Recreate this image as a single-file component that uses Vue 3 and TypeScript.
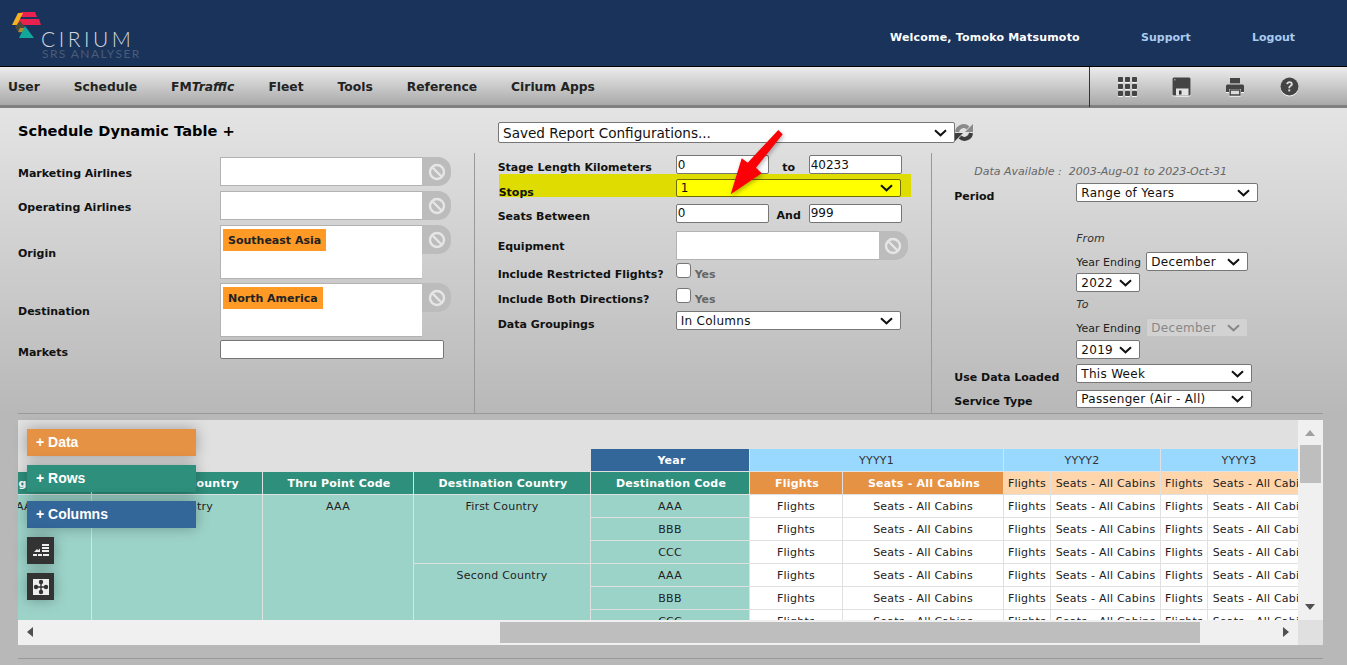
<template>
  <div class="page">
    <header class="top">
      <div class="logo">
        <svg class="logo-mark" width="32" height="30" viewBox="0 0 32 30">
          <polygon points="10,0 24,0 26,5 8,5" fill="#e8214f" />
          <polygon points="7,7 28,7 30,13 5,13" fill="#e8214f" />
          <polygon points="7,1 12,1 6,13 1,13" fill="#f5b324" />
          <polygon points="4,15 9,9 14,15 9,22" fill="#4a4a3a" />
          <polygon points="9,16 15,16 13,20 7,20" fill="#b08c2a" />
          <polygon points="14,14 23,26 8,26" fill="#12a79a" />
        </svg>
        <div class="logo-name">CIRIUM</div>
        <div class="logo-sub">SRS ANALYSER</div>
      </div>
      <div class="top-links">
        <span class="welcome">Welcome, Tomoko Matsumoto</span>
        <a class="support">Support</a>
        <a class="logout">Logout</a>
      </div>
    </header>

    <nav class="menu">
      <div class="menu-items">
        <a>User</a>
        <a>Schedule</a>
        <a>FM<i>Traffic</i></a>
        <a>Fleet</a>
        <a>Tools</a>
        <a>Reference</a>
        <a>Cirium Apps</a>
      </div>
      <div class="menu-icons">
        <svg width="20" height="20" viewBox="0 0 20 20" fill="#444">
          <template v-for="r in 3" :key="r">
            <rect v-for="c in 3" :key="c" :x="(c - 1) * 7" :y="(r - 1) * 7" width="5" height="5" rx="0.8" />
          </template>
        </svg>
        <svg width="20" height="20" viewBox="0 0 20 20">
          <rect x="0.5" y="0.5" width="18" height="18" rx="1.5" fill="#444" />
          <rect x="2" y="2" width="1.5" height="1.5" fill="#999" />
          <rect x="4" y="11.5" width="12.5" height="7" fill="#e4e4e4" />
          <rect x="7" y="13.5" width="2.5" height="4" fill="#333" />
        </svg>
        <svg width="20" height="20" viewBox="0 0 20 20" fill="#444">
          <rect x="4" y="1" width="10" height="5.5" />
          <path d="M1.5 7.5h15a1.5 1.5 0 0 1 1.5 1.5v6h-3v-3H3v3H0V9a1.5 1.5 0 0 1 1.5-1.5z" />
          <path d="M4.2 13h9.6v5H4.2z" fill="#ddd" stroke="#444" stroke-width="1.4" />
        </svg>
        <svg width="20" height="20" viewBox="0 0 20 20">
          <circle cx="9.5" cy="9.5" r="9" fill="#444" />
          <path d="M6.3 7.1C6.5 5.1 7.9 4.2 9.6 4.2c1.9 0 3.2 1.1 3.2 2.8 0 1.4-.8 2-1.7 2.6-.7.5-1 .8-1 1.7H8.4c0-1.4.4-2 1.3-2.7.7-.5 1.1-.8 1.1-1.5 0-.7-.5-1.2-1.2-1.2-.8 0-1.3.5-1.4 1.3z" fill="#ddd" />
          <rect x="8.3" y="12.4" width="1.9" height="2" fill="#ddd" />
        </svg>
      </div>
    </nav>

    <main class="body">
      <div class="title-row">
        <h1>Schedule Dynamic Table +</h1>
        <select class="saved"><option>Saved Report Configurations...</option></select>
        <svg class="refresh" width="20" height="19" viewBox="0 0 20 19" fill="none" stroke-width="4">
          <path d="M3 9A6.5 6.5 0 0 1 14 5" stroke="#8a8a8a" />
          <polygon points="11,9 19,9 19,1" fill="#8a8a8a" stroke="none" />
          <path d="M17 10A6.5 6.5 0 0 1 6 14" stroke="#3c3c3c" />
          <polygon points="9,10 1,10 1,18" fill="#3c3c3c" stroke="none" />
        </svg>
      </div>

      <section class="form">
        <div class="col col-left">
          <div class="row r1">
            <label>Marketing Airlines</label>
            <div class="pick"><div class="pick-box"></div><button class="clear"><svg width="18" height="18" viewBox="0 0 18 18" fill="none" stroke="#e6e6e6" stroke-width="2.4"><circle cx="9" cy="9" r="7" /><path d="M4 4l10 10" /></svg></button></div>
          </div>
          <div class="row r2">
            <label>Operating Airlines</label>
            <div class="pick"><div class="pick-box"></div><button class="clear"><svg width="18" height="18" viewBox="0 0 18 18" fill="none" stroke="#e6e6e6" stroke-width="2.4"><circle cx="9" cy="9" r="7" /><path d="M4 4l10 10" /></svg></button></div>
          </div>
          <div class="row r3">
            <label>Origin</label>
            <div class="pick tall"><div class="pick-box"><span class="tag">Southeast Asia</span></div><button class="clear"><svg width="18" height="18" viewBox="0 0 18 18" fill="none" stroke="#e6e6e6" stroke-width="2.4"><circle cx="9" cy="9" r="7" /><path d="M4 4l10 10" /></svg></button></div>
          </div>
          <div class="row r4">
            <label>Destination</label>
            <div class="pick tall"><div class="pick-box"><span class="tag">North America</span></div><button class="clear"><svg width="18" height="18" viewBox="0 0 18 18" fill="none" stroke="#e6e6e6" stroke-width="2.4"><circle cx="9" cy="9" r="7" /><path d="M4 4l10 10" /></svg></button></div>
          </div>
          <div class="row r5">
            <label>Markets</label>
            <input class="markets" type="text" />
          </div>
        </div>

        <div class="col col-mid">
          <div class="mrow m1">
            <label>Stage Length Kilometers</label>
            <input class="num" value="0" /><b class="sep">to</b><input class="num" value="40233" />
          </div>
          <div class="mrow m2">
            <label>Stops</label>
            <select class="wide yellow"><option>1</option></select>
          </div>
          <div class="mrow m3">
            <label>Seats Between</label>
            <input class="num" value="0" /><b class="sep">And</b><input class="num" value="999" />
          </div>
          <div class="mrow m4">
            <label>Equipment</label>
            <div class="pick mid"><div class="pick-box"></div><button class="clear"><svg width="18" height="18" viewBox="0 0 18 18" fill="none" stroke="#e6e6e6" stroke-width="2.4"><circle cx="9" cy="9" r="7" /><path d="M4 4l10 10" /></svg></button></div>
          </div>
          <div class="mrow m5">
            <label>Include Restricted Flights?</label>
            <span class="check"></span><b class="yes">Yes</b>
          </div>
          <div class="mrow m6">
            <label>Include Both Directions?</label>
            <span class="check"></span><b class="yes">Yes</b>
          </div>
          <div class="mrow m7">
            <label>Data Groupings</label>
            <select class="wide"><option>In Columns</option></select>
          </div>
          <svg class="arrow" width="60" height="70" viewBox="0 0 60 70">
            <polygon points="49.3,1 53.7,5.3 27,38.7 32.7,44.3 1.7,65.3 12.7,29.3 18.7,33.7" fill="#fb0007" />
          </svg>
        </div>

        <div class="col col-right">
          <div class="avail">Data Available :&nbsp; 2003-Aug-01 to 2023-Oct-31</div>
          <div class="rrow period">
            <label>Period</label>
            <select class="s-period"><option>Range of Years</option></select>
          </div>
          <div class="range">
            <em>From</em>
            <div class="ending"><span>Year Ending</span><select class="s-month"><option>December</option></select></div>
            <select class="s-year"><option>2022</option></select>
            <em class="to">To</em>
            <div class="ending e2"><span>Year Ending</span><select class="s-month" disabled><option>December</option></select></div>
            <select class="s-year y2"><option>2019</option></select>
          </div>
          <div class="rrow loaded">
            <label>Use Data Loaded</label>
            <select class="s-load"><option>This Week</option></select>
          </div>
          <div class="rrow service">
            <label>Service Type</label>
            <select class="s-load"><option>Passenger (Air - All)</option></select>
          </div>
        </div>
      </section>

      <section class="pivot">
        <div class="pivot-main">
          <div class="pivot-view">
            <table class="grid">
              <colgroup>
                <col v-for="w in colWidths" :key="w.id" :style="{ width: w.px + 'px' }" />
              </colgroup>
              <thead>
                <tr>
                  <th colspan="4" class="blank"></th>
                  <th class="h-blue">Year</th>
                  <th colspan="2" class="h-sky">YYYY1</th>
                  <th colspan="2" class="h-sky">YYYY2</th>
                  <th colspan="2" class="h-sky">YYYY3</th>
                </tr>
                <tr>
                  <th v-for="h in rowHeads" :key="h" class="h-green">{{ h }}</th>
                  <th class="h-orange">Flights</th>
                  <th class="h-orange">Seats - All Cabins</th>
                  <template v-for="y in 2" :key="y">
                    <th class="h-peach">Flights</th>
                    <th class="h-peach">Seats - All Cabins</th>
                  </template>
                </tr>
              </thead>
              <tbody>
                <tr v-for="(row, i) in rows" :key="i">
                  <template v-if="i === 0">
                    <td rowspan="6" class="c-green">AAA</td>
                    <td rowspan="6" class="c-green">One Country</td>
                    <td rowspan="6" class="c-green">AAA</td>
                  </template>
                  <td v-if="row.country" :rowspan="row.span" class="c-green">{{ row.country }}</td>
                  <td class="c-green">{{ row.code }}</td>
                  <template v-for="y in 3" :key="y">
                    <td>Flights</td>
                    <td>Seats - All Cabins</td>
                  </template>
                </tr>
              </tbody>
            </table>
          </div>
          <div class="vbar">
            <span class="tri up"></span>
            <div class="vthumb"></div>
            <span class="tri down"></span>
          </div>
        </div>
        <div class="pivot-foot">
          <div class="hbar">
            <span class="tri left"></span>
            <div class="hthumb"></div>
            <span class="tri right"></span>
          </div>
          <div class="corner"></div>
        </div>

        <div class="floats">
          <div class="fbtn f-data">+ Data</div>
          <div class="fbtn f-rows">+ Rows</div>
          <div class="fbtn f-cols">+ Columns</div>
          <div class="fsq">
            <svg width="16" height="14" viewBox="0 0 16 14" fill="#eee">
              <rect x="9" y="0" width="7" height="2" />
              <rect x="9" y="3" width="7" height="2" />
              <rect x="9" y="6" width="7" height="2" />
              <path d="M1 8l3-3 1.2 1.2L7 4.5V8z" />
              <path d="M0 10h4v2H0zM5 10h4v2H5zM10 10h6v2h-6z" />
            </svg>
          </div>
          <div class="fsq">
            <svg width="16" height="16" viewBox="0 0 16 16">
              <rect width="16" height="16" fill="#eee" />
              <circle cx="8" cy="3" r="2.2" fill="#333" />
              <circle cx="8" cy="13" r="2.2" fill="#333" />
              <circle cx="3" cy="8" r="2.2" fill="#333" />
              <circle cx="13" cy="8" r="2.2" fill="#333" />
              <path d="M8 4v8M4 8h8" stroke="#333" stroke-width="1.4" />
            </svg>
          </div>
        </div>
      </section>
      <div class="bottom-rule"></div>
    </main>
  </div>
</template>

<script setup lang="ts">
const colWidths = [
  { id: 'a', px: 127 },
  { id: 'b', px: 171 },
  { id: 'c', px: 151 },
  { id: 'd', px: 177 },
  { id: 'e', px: 159 },
  { id: 'f', px: 93 },
  { id: 'g', px: 161 },
  { id: 'h', px: 47 },
  { id: 'i', px: 110 },
  { id: 'j', px: 47 },
  { id: 'k', px: 110 }
]

const rowHeads = ['Origin Code', 'Thru Point Country', 'Thru Point Code', 'Destination Country', 'Destination Code']

const rows = [
  { country: 'First Country', span: 3, code: 'AAA' },
  { code: 'BBB' },
  { code: 'CCC' },
  { country: 'Second Country', span: 3, code: 'AAA' },
  { code: 'BBB' },
  { code: 'CCC' }
]
</script>

<style>
html,
body {
  margin: 0;
  height: 665px;
  overflow: hidden;
}
</style>

<style scoped>
.page {
  width: 1347px;
  height: 665px;
  overflow: hidden;
  font-family: 'DejaVu Sans', Verdana, sans-serif;
  font-size: 11px;
  color: #111;
  background: #b8b8b8;
}

.top {
  height: 66px;
  background: #1a335b;
  border-bottom: 1px solid #000;
  display: flex;
  justify-content: space-between;
}

.logo {
  width: 150px;
  position: relative;
}

.logo-mark {
  position: absolute;
  left: 11px;
  top: 12px;
}

.logo-name {
  position: absolute;
  left: 41px;
  top: 29px;
  line-height: 20px;
  font-family: Lato, sans-serif;
  font-weight: 300;
  font-size: 21px;
  letter-spacing: 3.5px;
  color: #d2d7de;
}

.logo-sub {
  position: absolute;
  left: 42px;
  top: 49px;
  line-height: 10px;
  font-family: Lato, sans-serif;
  font-size: 12px;
  letter-spacing: 1.4px;
  white-space: nowrap;
  color: #4a5c76;
}

.top-links {
  display: flex;
  align-items: center;
  padding-top: 8px;
  height: 58px;
  font-weight: bold;
  font-size: 11px;
}

.welcome {
  color: #fff;
  width: 251px;
  letter-spacing: 0.2px;
}

.support {
  color: #a9cbee;
  width: 111px;
}

.logout {
  color: #a9cbee;
  width: 95px;
}

.menu {
  height: 38px;
  display: flex;
  justify-content: space-between;
  background: linear-gradient(#ececec, #a9a9a9);
  border-bottom: 3px solid #808080;
}

.menu-items {
  display: flex;
  align-items: center;
  gap: 34px;
  padding: 2px 0 0 8px;
  font-weight: bold;
  font-size: 12.3px;
  color: #222;
}

.menu-items i {
  font-weight: bold;
}

.menu-icons {
  width: 258px;
  border-left: 1px solid #333;
  height: 40px;
  margin-bottom: -3px;
  display: flex;
  align-items: center;
  gap: 34px;
  padding-left: 28px;
  box-sizing: border-box;
}

.menu-icons svg {
  filter: drop-shadow(0 1px 0 #f4f4f4);
}

.body {
  height: 557px;
  padding: 12px 24px 0 18px;
  box-sizing: border-box;
  position: relative;
  background: linear-gradient(#e4e4e4, #b8b8b8 306px);
}

.title-row {
  height: 33px;
  display: flex;
  align-items: flex-start;
}

h1 {
  margin: 0;
  width: 480px;
  font-size: 14.6px;
  line-height: 22px;
  font-weight: bold;
  color: #000;
}

select {
  appearance: none;
  font-family: 'DejaVu Sans', Verdana, sans-serif;
  font-size: 12px;
  letter-spacing: 0.3px;
  color: #111;
  background-color: #fff;
  background-image: url("data:image/svg+xml,%3Csvg xmlns='http://www.w3.org/2000/svg' width='13' height='8' viewBox='0 0 13 8'%3E%3Cpath d='M1 1.3l5.5 5 5.5-5' fill='none' stroke='%23111' stroke-width='2'/%3E%3C/svg%3E");
  background-repeat: no-repeat;
  background-position: right 7px center;
  border: 1px solid #767676;
  border-radius: 2px;
  padding: 0 0 0 4px;
  margin: 0;
  box-sizing: border-box;
}

select:disabled {
  color: #888;
  background-color: #d2d2d2;
  background-image: url("data:image/svg+xml,%3Csvg xmlns='http://www.w3.org/2000/svg' width='13' height='8' viewBox='0 0 13 8'%3E%3Cpath d='M1 1.3l5.5 5 5.5-5' fill='none' stroke='%23888' stroke-width='2'/%3E%3C/svg%3E");
  border-color: #c4c4c4;
  opacity: 1;
}

.saved {
  width: 457px;
  height: 21px;
  margin-top: 2px;
  font-size: 13.6px;
  letter-spacing: 0;
}

.refresh {
  margin-top: 3px;
  margin-left: -1px;
}

.form {
  display: flex;
  height: 260px;
  border-bottom: 1px solid #999;
  box-sizing: content-box;
}

label {
  font-weight: bold;
  color: #111;
}

.col-left {
  width: 456px;
  padding-top: 4px;
  box-sizing: border-box;
}

.row {
  display: flex;
  align-items: center;
}

.row label {
  width: 202px;
  padding-top: 2px;
}

.r1 label,
.r2 label {
  padding-top: 4px;
}

.r2,
.r3 {
  margin-top: 5px;
}

.r4 {
  margin-top: 4px;
}

.r5 {
  margin-top: 3px;
}

.r5 label {
  padding-top: 6px;
}

.pick {
  display: flex;
  height: 29px;
  width: 231px;
}

.pick.tall {
  height: 54px;
}

.pick.mid {
  width: 232px;
}

.pick-box {
  flex: 1;
  background: #fff;
  border: 1px solid #b2b2b2;
  border-right: none;
  box-sizing: border-box;
  padding: 3px 2px;
}

.clear {
  width: 29px;
  height: 29px;
  padding: 0;
  border: none;
  background: #bcbcbc;
  border-radius: 0 13px 13px 0;
  display: flex;
  align-items: center;
  justify-content: center;
}

.tag {
  display: inline-block;
  background: #ff9a26;
  color: #222;
  font-weight: bold;
  height: 22px;
  line-height: 24px;
  padding: 0 5px;
}

.markets {
  width: 224px;
  height: 19px;
  box-sizing: border-box;
  border: 1px solid #767676;
  border-radius: 2px;
  padding: 0;
  background: #fff;
}

.col-mid {
  width: 459px;
  border-left: 1px solid #999;
  border-right: 1px solid #999;
  box-sizing: border-box;
  padding-left: 23px;
  position: relative;
}

.mrow {
  display: flex;
  align-items: center;
}

.mrow label {
  width: 178px;
  flex: none;
  padding-top: 2px;
}

.m1 {
  margin-top: 2px;
  height: 19px;
}

.m1 label,
.m3 label {
  padding-top: 6px;
}

.m2 {
  height: 23px;
  margin-left: 1px;
  background: #dedc00;
  width: 412px;
  position: relative;
  align-items: flex-end;
}

.m2 label {
  width: 177px;
  margin-bottom: -2px;
}

.m3 {
  height: 18px;
  margin-top: 7px;
}

.m4 {
  height: 29px;
  margin-top: 9px;
}

.m5 {
  height: 15px;
  margin-top: 3px;
}

.m6 {
  height: 15px;
  margin-top: 10px;
}

.m7 {
  height: 19px;
  margin-top: 8px;
}

.m5 label,
.m6 label,
.m7 label {
  padding-top: 8px;
}

.num {
  width: 93px;
  height: 19px;
  box-sizing: border-box;
  border: 1px solid #767676;
  border-radius: 2px;
  padding: 0 1px;
  font-family: 'DejaVu Sans', Verdana, sans-serif;
  font-size: 12px;
  color: #111;
  background: #fff;
}

.sep {
  width: 40px;
  text-align: center;
  padding-top: 5px;
}

.wide {
  width: 225px;
  height: 19px;
}

.yellow {
  background-color: #ffff00;
  border-color: #6d6d00;
  height: 18px;
}

.check {
  width: 15px;
  height: 15px;
  box-sizing: border-box;
  background: #fff;
  border: 1px solid #767676;
  border-radius: 3px;
}

.yes {
  margin-left: 4px;
  padding-top: 7px;
  color: #666;
}

.arrow {
  position: absolute;
  left: 254px;
  top: -24px;
  filter: drop-shadow(1px 2px 2px rgba(0, 0, 0, 0.3));
  pointer-events: none;
}

.col-right {
  width: 391px;
  padding-left: 22px;
  box-sizing: border-box;
}

.avail {
  margin: 12px 0 0 20px;
  height: 14px;
  font-style: italic;
  color: #666;
}

.rrow {
  display: flex;
}

.rrow label {
  width: 122px;
  flex: none;
}

.period {
  margin-top: 4px;
}

.period label {
  padding-top: 7px;
}

.s-period {
  width: 182px;
  height: 19px;
}

.range {
  margin: 29px 0 0 122px;
  display: flex;
  flex-direction: column;
  align-items: flex-start;
}

.range em {
  line-height: 14px;
  color: #333;
}

.to {
  margin-top: 6px;
}

.ending {
  display: flex;
  align-items: center;
  margin-top: 6px;
  color: #222;
}

.ending span {
  width: 70px;
  padding-top: 2px;
}

.s-month {
  width: 102px;
  height: 19px;
}

.s-year {
  width: 64px;
  height: 19px;
  margin-top: 2px;
}

.s-year.y2 {
  margin-top: 3px;
}

.loaded {
  margin-top: 5px;
}

.service {
  margin-top: 6px;
}

.loaded label {
  padding-top: 7px;
}

.service label {
  padding-top: 5px;
}

.s-load {
  width: 176px;
  height: 19px;
}

.service .s-load {
  height: 18px;
}

.pivot {
  margin-top: 6px;
  width: 1305px;
  height: 225px;
  position: relative;
  background: #f0f0f0;
}

.pivot-main {
  display: flex;
  height: 200px;
}

.pivot-view {
  width: 1280px;
  height: 200px;
  overflow: hidden;
  background: #e0e0e0;
  padding-top: 29px;
  box-sizing: border-box;
}

.grid {
  table-layout: fixed;
  width: 1353px;
  margin-left: -53px;
  border-collapse: separate;
  border-spacing: 0;
  color: #222;
  text-align: center;
}

th,
td {
  height: 21px;
  padding: 1px 0 0;
  border-right: 1px solid #e0e0e0;
  border-bottom: 1px solid #e0e0e0;
  white-space: nowrap;
  overflow: hidden;
  font-size: 11px;
  font-weight: normal;
  line-height: 21px;
  letter-spacing: 0.22px;
}

td {
  background: #fff;
  vertical-align: top;
}

th.blank {
  background: #e0e0e0;
}

.h-blue {
  background: #336699;
  color: #fff;
  font-weight: bold;
  padding-left: 3px;
}

.h-sky {
  background: #99d9ff;
  color: #333;
}

.h-green {
  background: #2e8f7c;
  color: #fff;
  font-weight: bold;
  padding-left: 2px;
}

.h-green:first-child {
  padding: 1px 0 0 18px;
}

.h-orange {
  background: #e69245;
  color: #fff;
  font-weight: bold;
  padding-left: 2px;
}

.h-peach {
  background: #ffd5ab;
  color: #222;
}

.c-green {
  background: #9cd3c9;
}

.vbar {
  width: 25px;
  height: 200px;
  position: relative;
}

.vthumb {
  position: absolute;
  left: 2px;
  top: 25px;
  width: 21px;
  height: 38px;
  background: #bebebe;
}

.tri {
  position: absolute;
  width: 0;
  height: 0;
  border-style: solid;
  border-color: transparent;
}

.tri.up {
  left: 7px;
  top: 10px;
  border-width: 0 5.5px 6px;
  border-bottom-color: #a0a0a0;
}

.tri.down {
  left: 7px;
  top: 184px;
  border-width: 6px 5.5px 0;
  border-top-color: #505050;
}

.pivot-foot {
  display: flex;
  height: 25px;
}

.hbar {
  width: 1280px;
  position: relative;
}

.hthumb {
  position: absolute;
  left: 482px;
  top: 2px;
  width: 700px;
  height: 21px;
  background: #bebebe;
}

.tri.left {
  left: 9px;
  top: 7px;
  border-width: 5.5px 6px 5.5px 0;
  border-right-color: #505050;
}

.tri.right {
  left: 1265px;
  top: 7px;
  border-width: 5.5px 0 5.5px 6px;
  border-left-color: #505050;
}

.corner {
  width: 25px;
  background: #e0e0e0;
}

.floats {
  position: absolute;
  left: 9px;
  top: 9px;
  display: flex;
  flex-direction: column;
  align-items: flex-start;
  gap: 9px;
}

.fbtn {
  width: 169px;
  height: 27px;
  box-sizing: border-box;
  padding-left: 9px;
  line-height: 27px;
  font-family: 'Liberation Sans', Arial, sans-serif;
  font-weight: bold;
  font-size: 14px;
  color: #fff;
  box-shadow: 0 0 14px rgba(0, 0, 0, 0.3);
}

.f-data {
  background: #e69245;
}

.f-rows {
  background: #2e8f7c;
}

.f-cols {
  background: #336699;
}

.fsq {
  width: 27px;
  height: 27px;
  background: #333;
  display: flex;
  align-items: center;
  justify-content: center;
  box-shadow: 0 0 14px rgba(0, 0, 0, 0.3);
}

.bottom-rule {
  margin-top: 13px;
  width: 1305px;
  border-top: 1px solid #999;
}
</style>
